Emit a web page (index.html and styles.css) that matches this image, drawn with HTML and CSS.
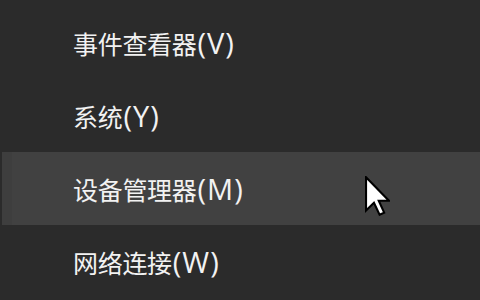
FILE: index.html
```html
<!DOCTYPE html>
<html lang="zh-CN">
<head>
  <meta charset="UTF-8" />
  <title>快速链接菜单</title>
  <link rel="stylesheet" href="styles.css">
</head>
<body>
  <ul class="menu">
    <li class="item">事件查看器<span class="key">(V)</span></li>
    <li class="item">系统<span class="key">(Y)</span></li>
    <li class="item active">
      设备管理器<span class="key">(M)</span>
      <svg class="cursor" viewBox="0 0 12 19" width="25" height="40">
        <polygon points="0.5,0.5 0.5,16.5 4.3,12.8 7,18.5 9.2,17.5 6.6,11.8 11.5,11.8" fill="#fff" stroke="#000" stroke-width="1" stroke-linejoin="miter"/>
      </svg>
    </li>
    <li class="item">网络连接<span class="key">(W)</span></li>
  </ul>
</body>
</html>
```

FILE: styles.css
```css
* { margin: 0; padding: 0; box-sizing: border-box; }
body {
  background: #2b2b2b;
  width: 480px; height: 300px; overflow: hidden;
  font-family: "Open Sans", "Noto Sans CJK SC", sans-serif;
}

.menu { list-style: none; padding-top: 6px; }

.item {
  position: relative;
  height: 73px;
  display: flex; align-items: center;
  padding-left: 73px;
  color: #f2f2f2;
  font-size: 25px;
  letter-spacing: -0.3px;
}

.key {
  font-size: 29px;
  letter-spacing: 1px;
  margin-left: 1px;
}

.item.active {
  background: #414141;
  margin-left: 2px;
  border-left: 10px solid #3e3e3e;
  padding-left: 61px;
}

.cursor {
  position: absolute;
  left: 353px; top: 24px;
}
```
